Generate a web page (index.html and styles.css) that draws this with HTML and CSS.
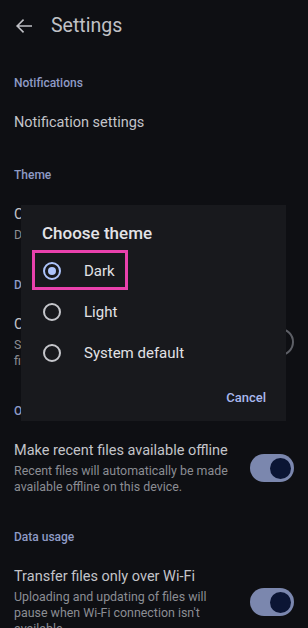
FILE: index.html
```html
<!DOCTYPE html>
<html lang="en">
<head>
<meta charset="utf-8">
<title>Settings</title>
<link rel="stylesheet" href="styles.css">
</head>
<body>
<div class="screen">
  <header class="appbar">
    <svg class="back" width="16" height="14" viewBox="0 0 16 14" aria-hidden="true">
      <path d="M15.5 7H1.2M7 1.2L1.2 7L7 12.8" fill="none" stroke="#bfc0c5" stroke-width="1.6" stroke-linecap="square"/>
    </svg>
    <h1 class="appbar-title">Settings</h1>
  </header>

  <section class="group first">
    <h2 class="group-title">Notifications</h2>
    <div class="item">
      <div class="item-text"><div class="item-title">Notification settings</div></div>
    </div>
  </section>

  <section class="group">
    <h2 class="group-title">Theme</h2>
    <div class="item">
      <div class="item-text">
        <div class="item-title">Choose theme</div>
        <div class="item-sub">Dark</div>
      </div>
    </div>
  </section>

  <section class="group">
    <h2 class="group-title">Display</h2>
    <div class="item">
      <div class="item-text">
        <div class="item-title">Compact</div>
        <div class="item-sub">Show<br>files</div>
      </div>
      <div class="toggle off"><span class="thumb"></span></div>
    </div>
  </section>

  <section class="group">
    <h2 class="group-title">Offline</h2>
    <div class="item">
      <div class="item-text">
        <div class="item-title">Make recent files available offline</div>
        <div class="item-sub">Recent files will automatically be made available offline on this device.</div>
      </div>
      <div class="toggle on"><span class="thumb"></span></div>
    </div>
  </section>

  <section class="group">
    <h2 class="group-title">Data usage</h2>
    <div class="item">
      <div class="item-text">
        <div class="item-title">Transfer files only over Wi-Fi</div>
        <div class="item-sub">Uploading and updating of files will pause when Wi-Fi connection isn't available.</div>
      </div>
      <div class="toggle on"><span class="thumb"></span></div>
    </div>
  </section>

  <div class="dialog" role="dialog">
    <h3 class="dialog-title">Choose theme</h3>
    <div class="options">
      <div class="option selected">
        <span class="radio"></span><span class="option-label">Dark</span>
        <span class="highlight"></span>
      </div>
      <div class="option">
        <span class="radio"></span><span class="option-label">Light</span>
      </div>
      <div class="option">
        <span class="radio"></span><span class="option-label">System default</span>
      </div>
    </div>
    <div class="actions">
      <button class="text-btn">Cancel</button>
    </div>
  </div>
</div>
</body>
</html>
```

FILE: styles.css
```css
* { box-sizing: border-box; }

html, body {
  margin: 0;
  padding: 0;
  background: #0e0f13;
  overflow: hidden;
}

body {
  font-family: Roboto, "Noto Sans", "Liberation Sans", sans-serif;
  color: #c3c4c9;
}

.screen {
  position: relative;
  width: 308px;
  height: 628px;
  overflow: hidden;
}

.appbar {
  height: 52px;
  display: flex;
  align-items: center;
  padding-left: 16px;
  gap: 19px;
}

.back { display: block; }

.appbar-title {
  margin: 0;
  font-size: 19.5px;
  font-weight: 400;
  color: #c0c1c6;
  line-height: 28px;
}

.group-title {
  margin: 20px 14px 0;
  height: 16px;
  line-height: 16px;
  font-size: 12px;
  font-weight: 500;
  color: #8e9bc6;
}

.group.first .group-title { margin-top: 23px; }

.item {
  display: flex;
  align-items: center;
  gap: 16px;
  padding: 22px 14px 14px;
}

.item-text {
  flex: 1;
  min-width: 0;
}

.item-title {
  font-size: 14.5px;
  line-height: 20px;
  color: #c3c4c9;
  white-space: nowrap;
}

.item-sub {
  margin-top: 2px;
  font-size: 12.4px;
  line-height: 16px;
  color: #8b8d93;
}

.toggle {
  flex: none;
  position: relative;
  width: 44px;
  height: 28px;
  border-radius: 14px;
}

.toggle.on { background: #7b87ae; }

.toggle.on .thumb {
  position: absolute;
  right: 3.5px;
  top: 3.5px;
  width: 21px;
  height: 21px;
  border-radius: 50%;
  background: #0b1534;
}

.toggle.off { border: 2px solid #5d5f66; }

.toggle.off .thumb {
  position: absolute;
  left: 5px;
  top: 6px;
  width: 12px;
  height: 12px;
  border-radius: 50%;
  background: #5d5f66;
}

/* Dialog */
.dialog {
  position: absolute;
  left: 21px;
  top: 205px;
  width: 265px;
  height: 216px;
  background: #18191d;
  padding-top: 16px;
}

.dialog-title {
  margin: 0 21px;
  font-size: 17px;
  font-weight: 500;
  line-height: 24px;
  color: #e3e3e7;
}

.options { margin-top: 5px; }

.option {
  position: relative;
  height: 41px;
  display: flex;
  align-items: center;
  padding-left: 22px;
  gap: 23px;
}

.radio {
  flex: none;
  width: 18px;
  height: 18px;
  border-radius: 50%;
  border: 2px solid #c5c6cb;
  display: flex;
  align-items: center;
  justify-content: center;
}

.option.selected .radio { border-color: #aec4fb; }

.option.selected .radio::after {
  content: "";
  width: 8px;
  height: 8px;
  border-radius: 50%;
  background: #aec4fb;
}

.option-label {
  font-size: 15px;
  line-height: 20px;
  color: #e2e2e6;
}

.highlight {
  position: absolute;
  left: 11px;
  top: 0;
  width: 96px;
  height: 40px;
  border: 3px solid #e941ad;
}

.actions {
  margin-top: 6px;
  display: flex;
  justify-content: flex-end;
  padding-right: 12px;
}

.text-btn {
  height: 36px;
  padding: 0 8px;
  border: 0;
  background: transparent;
  font-family: Roboto, "Noto Sans", "Liberation Sans", sans-serif;
  font-size: 13px;
  font-weight: 500;
  color: #a8b8ee;
}
```
